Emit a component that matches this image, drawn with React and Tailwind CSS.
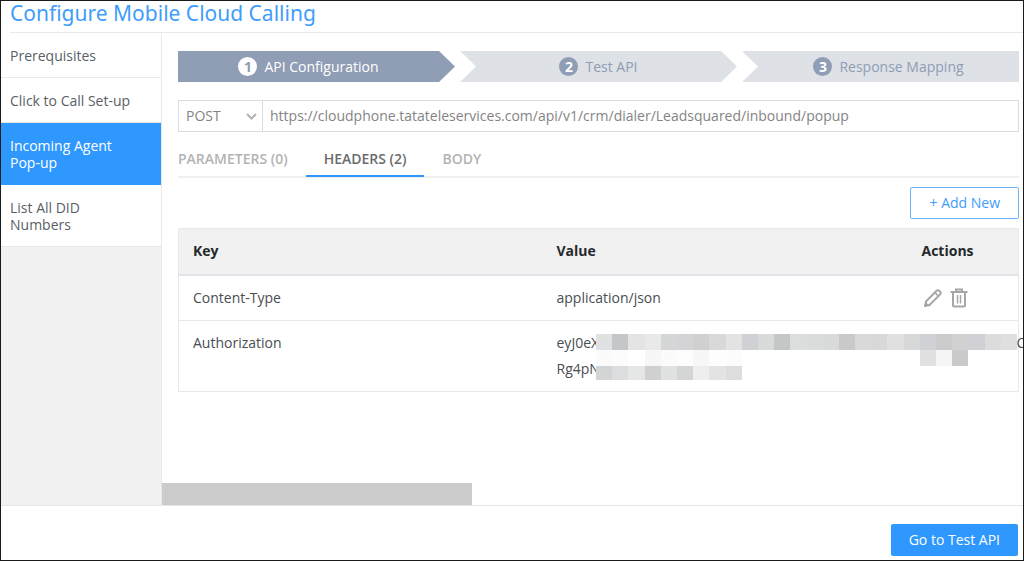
import React from 'react';
import clsx from 'clsx';

const NAV_ITEMS = [
    { label: 'Prerequisites' },
    { label: 'Click to Call Set-up' },
    { label: 'Incoming Agent Pop-up', active: true },
    { label: 'List All DID Numbers' },
];

const STEPS = [
    { label: 'API Configuration', active: true, shape: 'pr-4 [clip-path:polygon(0_0,calc(100%-16px)_0,100%_50%,calc(100%-16px)_100%,0_100%)]' },
    { label: 'Test API', shape: '[clip-path:polygon(0_0,calc(100%-16px)_0,100%_50%,calc(100%-16px)_100%,0_100%,16px_50%)]' },
    { label: 'Response Mapping', shape: 'pl-4 [clip-path:polygon(0_0,100%_0,100%_100%,0_100%,16px_50%)]' },
];

const TABS = [
    { label: 'PARAMETERS (0)' },
    { label: 'HEADERS (2)', active: true },
    { label: 'BODY' },
];

// Shades of the mosaic that hides the token, one list per line
const MASK_LINES = [
    {
        x: 0, y: 0, h: 16,
        shades: ['#e0e1e3', '#c5c6c8', '#e4e4e4', '#e9e9e9', '#d5d6d8', '#d4d4d6', '#d0d0d1', '#d9d9d9', '#e3e3e4', '#d0d1d4', '#d9dbda', '#c5c6c8', '#dcdedd', '#dadcdb', '#d9dbda', '#c9c9cb', '#d9d9d9', '#d7d8da', '#e0e0e0', '#d7d9d8', '#d0d1d4', '#cbcbcb', '#d1d1d1', '#d0d1d4', '#dcdcdc', '#dfdfdf'],
    },
    { x: 0, y: 16, h: 16, shades: ['#fbfbfb', '#fcfcfc', '#ffffff', '#f7f7f7', '#fbfbfb', '#fdfdfd', '#f7f7f7', '#fdfdfd', '#fcfcfc'] },
    { x: 0, y: 32, h: 14, shades: ['#d3d4d6', '#dcdddf', '#e5e7e6', '#d0d0d0', '#e0e2e1', '#d4d5d7', '#eeeeee', '#e3e3e3', '#dcdedd'] },
    { x: 20, y: 16, h: 16, shades: ['#e1e1e1', '#f5f5f5', '#cacaca'] },
];

const CELL = 421 / 26;

function TokenMask() {
    return (
        <svg className="absolute top-[4px] left-[39px]" width="421" height="46" viewBox="0 0 421 46" shapeRendering="crispEdges" aria-hidden="true">
            {MASK_LINES.map((line, i) =>
                line.shades.map((shade, j) => (
                    <rect key={`${i}-${j}`} x={(line.x + j) * CELL} y={line.y} width={CELL} height={line.h} fill={shade} />
                ))
            )}
        </svg>
    );
}

function PencilIcon() {
    return (
        <svg width="18" height="18" viewBox="0 0 18 18" fill="none" stroke="#a6a6a6" strokeWidth="2" strokeLinejoin="round">
            <path d="M1 17 2 12.5 12.6 1.8a1.9 1.9 0 0 1 2.7 0l.9.9a1.9 1.9 0 0 1 0 2.7L5.5 16z" />
            <path d="m11 3.6 3.4 3.4" strokeWidth="1.5" />
            <path d="M1 17l.8-3.5 2.7 2.7z" fill="#a6a6a6" strokeWidth="1" />
        </svg>
    );
}

function TrashIcon() {
    return (
        <svg width="18" height="20" viewBox="0 0 17 20" fill="none" stroke="#a6a6a6" strokeWidth="2">
            <path d="M0 4h17M5.5 4V1.5h6V4M2.5 4v13A1.5 1.5 0 0 0 4 18.5h9a1.5 1.5 0 0 0 1.5-1.5V4" />
            <path d="M7 7v8.5M10 7v8.5" strokeWidth="1.5" />
        </svg>
    );
}

function Sidebar() {
    return (
        <nav className="w-[161px] shrink-0 border-r border-[#e9e9e9] bg-[#f1f1f1] text-sm leading-[17px]">
            {NAV_ITEMS.map((item) => (
                <a
                    key={item.label}
                    href="#"
                    className={clsx(
                        'block border-b pt-[14px] pr-5 pb-[13px] pl-[9px]',
                        item.active ? 'border-[#2f98ff] bg-[#2f98ff] text-white' : 'border-[#e9e9e9] bg-white text-[#5a5f66]'
                    )}
                >
                    {item.label}
                </a>
            ))}
        </nav>
    );
}

function Steps() {
    return (
        <ol className="grid grid-cols-3 gap-[5px]">
            {STEPS.map((step, i) => (
                <li
                    key={step.label}
                    className={clsx(
                        'flex h-[31px] items-center justify-center gap-[7px] text-sm',
                        step.shape,
                        step.active ? 'bg-[#8f9db5] text-white' : 'bg-[#dee1e5] text-[#8f9db5]'
                    )}
                >
                    <span
                        className={clsx(
                            'flex size-[19px] items-center justify-center rounded-full text-sm font-bold',
                            step.active ? 'bg-white text-[#8f9db5]' : 'bg-[#8f9db5] text-white'
                        )}
                    >
                        {i + 1}
                    </span>
                    {step.label}
                </li>
            ))}
        </ol>
    );
}

function HeadersTable() {
    return (
        <table className="w-full table-fixed border-collapse border border-[#e6e9ec] text-left text-sm text-[#4a4d52]">
            <thead>
                <tr className="h-[46px] border-b-2 border-[#e1e4e8] bg-[#f1f1f1] text-[#25282c]">
                    <th className="w-[364px] pl-[14px] font-bold">Key</th>
                    <th className="pl-[14px] font-bold">Value</th>
                    <th className="w-[111px] pl-[14px] font-bold">Actions</th>
                </tr>
            </thead>
            <tbody>
                <tr className="h-[46px] border-b border-[#e6e9ec]">
                    <td className="pl-[14px]">Content-Type</td>
                    <td className="pl-[14px]">application/json</td>
                    <td className="pl-[14px]">
                        <div className="flex items-center gap-2 pl-[2px]">
                            <button type="button" aria-label="Edit header"><PencilIcon /></button>
                            <button type="button" aria-label="Delete header"><TrashIcon /></button>
                        </div>
                    </td>
                </tr>
                <tr className="align-top">
                    <td className="py-[9px] pl-[14px] leading-[26px]">Authorization</td>
                    <td className="py-[9px] pl-[14px] leading-[26px]">
                        <div className="relative whitespace-nowrap">
                            <div className="flex">
                                <span className="w-[460px] shrink-0">eyJ0eX</span>
                                <span>C</span>
                            </div>
                            <div>Rg4pN</div>
                            <TokenMask />
                        </div>
                    </td>
                    <td />
                </tr>
            </tbody>
        </table>
    );
}

export default function App() {
    return (
        <div className="flex min-h-screen flex-col overflow-hidden border border-[#1a1a1a] bg-white font-['Open_Sans','Noto_Sans',sans-serif]">
            <header className="ml-[9px] border-b border-[#e9e9e9] pb-[7px]">
                <h1 className="font-['Noto_Sans','Open_Sans',sans-serif] text-[21px] leading-6 text-[#3f9dfb]">Configure Mobile Cloud Calling</h1>
            </header>

            <div className="flex flex-1">
                <Sidebar />
                <main className="flex min-w-0 flex-1 flex-col">
                    <div className="flex-1 pt-[18px] pr-1 pl-4">
                        <Steps />

                        <div className="mt-[18px] flex h-8 text-sm text-[#848484]">
                            <div className="relative w-[85px] shrink-0 border border-[#d8dde4]">
                                <select aria-label="Request method" defaultValue="POST" className="h-full w-full appearance-none bg-transparent pl-[7px] outline-none">
                                    <option>POST</option>
                                    <option>GET</option>
                                </select>
                                <svg className="pointer-events-none absolute top-3 right-[5px]" width="11" height="8" viewBox="0 0 11 8" fill="none" stroke="#b3b3b3" strokeWidth="2">
                                    <path d="m1 1 4.500 4.500L10 1" />
                                </svg>
                            </div>
                            <input
                                aria-label="API URL"
                                defaultValue="https://cloudphone.tatateleservices.com/api/v1/crm/dialer/Leadsquared/inbound/popup"
                                className="min-w-0 flex-1 border border-l-0 border-[#d8dde4] px-[7px] outline-none"
                            />
                        </div>

                        <div className="flex border-b-2 border-[#f0f0f0] text-sm font-semibold" role="tablist">
                            {TABS.map((tab) => (
                                <button
                                    key={tab.label}
                                    type="button"
                                    role="tab"
                                    aria-selected={!!tab.active}
                                    className={clsx(
                                        '-mb-px h-[45px] border-b-2 px-[18px] pt-[10px] first:pl-0',
                                        tab.active ? 'border-[#2f98ff] text-[#6b6b6b]' : 'border-transparent text-[#b3b3b3]'
                                    )}
                                >
                                    {tab.label}
                                </button>
                            ))}
                        </div>

                        <div className="flex justify-end py-[9px]">
                            <button type="button" className="h-8 rounded-xs border border-[#6bb3fb] px-[18px] text-sm text-[#3f9dfb]">
                                + Add New
                            </button>
                        </div>

                        <HeadersTable />
                    </div>
                    <div className="h-[22px] w-[36%] bg-[#cbcbcb]" />
                </main>
            </div>

            <footer className="flex justify-end border-t border-[#e6e6e6] pt-[18px] pr-[5px] pb-1">
                <button type="button" className="h-8 rounded-xs bg-[#2f98ff] px-[18px] text-sm text-white">
                    Go to Test API
                </button>
            </footer>
        </div>
    );
}
